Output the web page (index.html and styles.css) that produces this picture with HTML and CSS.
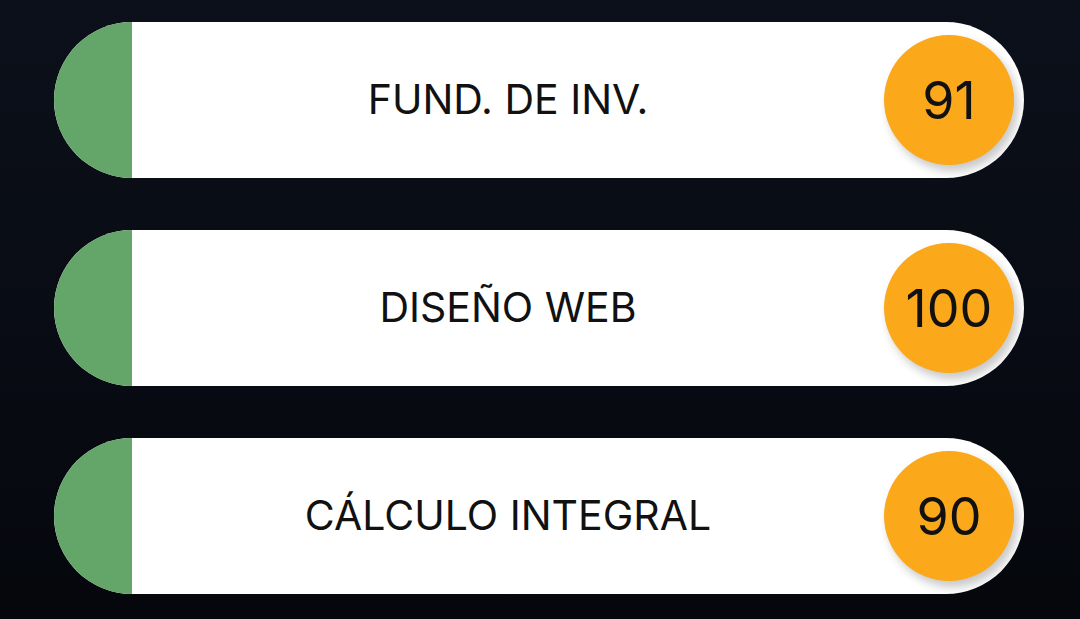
FILE: index.html
```html
<!DOCTYPE html>
<html lang="es">
<head>
<meta charset="utf-8">
<link rel="stylesheet" href="styles.css">
</head>
<body>
  <main class="list">
    <div class="card">
      <div class="stripe"></div>
      <div class="name">FUND. DE INV.</div>
      <div class="grade">91</div>
    </div>
    <div class="card">
      <div class="stripe"></div>
      <div class="name">DISEÑO WEB</div>
      <div class="grade">100</div>
    </div>
    <div class="card">
      <div class="stripe"></div>
      <div class="name">CÁLCULO INTEGRAL</div>
      <div class="grade">90</div>
    </div>
  </main>
</body>
</html>
```
FILE: styles.css
```css
html, body {
  margin: 0;
  height: 100%;
}
body {
  background: linear-gradient(180deg, #0c101a 0%, #080b13 60%, #05070c 100%);
  font-family: Inter, "Noto Sans", sans-serif;
  overflow: hidden;
}
.list {
  display: flex;
  flex-direction: column;
  gap: 52px;
  padding: 22px 56px 0 54px;
}
.card {
  display: flex;
  align-items: center;
  height: 156px;
  background: #ffffff;
  border-radius: 78px;
  overflow: hidden;
}
.stripe {
  align-self: stretch;
  width: 78px;
  background: #64a56a;
}
.name {
  flex: 1;
  text-align: center;
  font-size: 41px;
  color: #111;
  padding-bottom: 2px;
}
.grade {
  width: 130px;
  height: 130px;
  margin-right: 10px;
  border-radius: 50%;
  background: #fba81a;
  display: flex;
  align-items: center;
  justify-content: center;
  font-size: 52px;
  color: #111;
  box-shadow: 4px 6px 10px rgba(0, 0, 0, 0.22);
}
```
